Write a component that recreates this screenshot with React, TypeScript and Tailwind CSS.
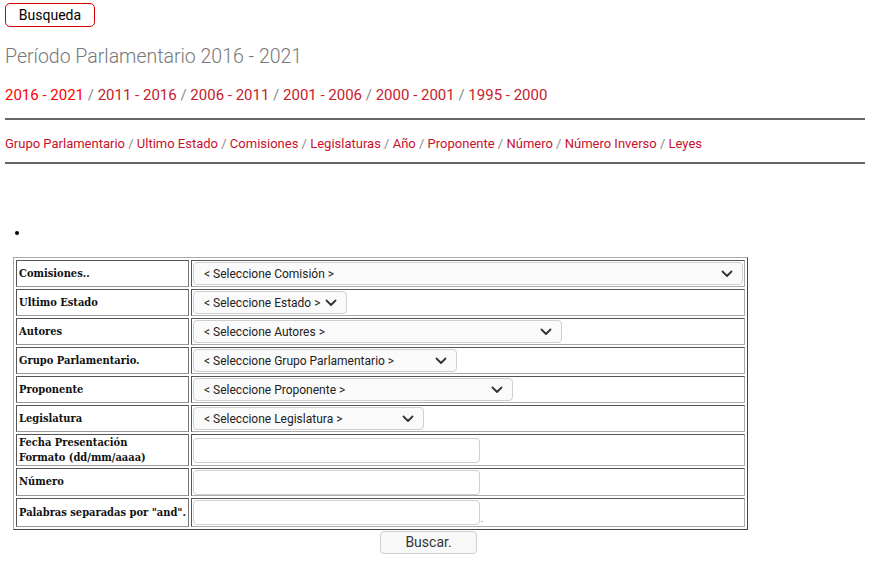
import React from "react";

const Chevron = () => (
  <svg width="12" height="8" viewBox="0 0 12 8" className="shrink-0">
    <path d="M1.5 1.5 L6 6 L10.5 1.5" fill="none" stroke="#333" strokeWidth="1.8" strokeLinecap="round" strokeLinejoin="round" />
  </svg>
);

const Sel = ({ text, w }: { text: string; w: string }) => (
  <div
    className={`${w} h-[23px] flex items-center justify-between gap-[4px] pl-[10px] pr-[9px] border border-[#cfcfcf] rounded-[4px] bg-[#fafafa] text-[12px] text-[#222]`}
    style={{ fontFamily: "Roboto, sans-serif" }}
  >
    <span className="whitespace-nowrap">{text}</span>
    <Chevron />
  </div>
);

const Inp = () => (
  <div className="w-[287px] h-[25px] border border-[#cfcfcf] rounded-[4px] bg-white" />
);

const labelCls =
  "border border-t-[#555] border-l-[#555] border-b-[#999] border-r-[#777] px-[2px] py-0 text-left align-middle font-bold text-[11px] leading-[14px] text-[#111] w-[175px] whitespace-nowrap";
const fieldCls =
  "border border-t-[#555] border-l-[#555] border-b-[#aaa] border-r-[#aaa] px-[1px] py-0 align-middle";

export default function App() {
  const years = ["2011 - 2016", "2006 - 2011", "2001 - 2006", "2000 - 2001", "1995 - 2000"];
  const nav = [
    "Grupo Parlamentario",
    "Ultimo Estado",
    "Comisiones",
    "Legislaturas",
    "Año",
    "Proponente",
    "Número",
    "Número Inverso",
    "Leyes",
  ];
  const rows: { label: React.ReactNode; field: React.ReactNode; h: string }[] = [
    { label: "Comisiones..", field: <Sel text="< Seleccione Comisión >" w="w-[550px]" />, h: "h-[27px]" },
    { label: "Ultimo Estado", field: <Sel text="< Seleccione Estado >" w="w-[154px]" />, h: "h-[27px]" },
    { label: "Autores", field: <Sel text="< Seleccione Autores >" w="w-[369px]" />, h: "h-[27px]" },
    { label: "Grupo Parlamentario.", field: <Sel text="< Seleccione Grupo Parlamentario >" w="w-[264px]" />, h: "h-[27px]" },
    { label: "Proponente", field: <Sel text="< Seleccione Proponente >" w="w-[320px]" />, h: "h-[27px]" },
    { label: "Legislatura", field: <Sel text="< Seleccione Legislatura >" w="w-[231px]" />, h: "h-[27px]" },
    {
      label: (
        <span className="block leading-[15px]">
          Fecha Presentación
          <br />
          Formato (dd/mm/aaaa)
        </span>
      ),
      field: <Inp />,
      h: "h-[32px]",
    },
    { label: "Número", field: <Inp />, h: "h-[28px]" },
    {
      label: 'Palabras separadas por "and".',
      field: (
        <div className="flex items-end">
          <Inp />
          <span className="text-[8px] leading-[8px] ml-[1px] mb-[1px]">.</span>
        </div>
      ),
      h: "h-[29px]",
    },
  ];

  return (
    <div className="w-[870px] h-[573px] bg-white px-[5px] pt-[3px]" style={{ fontFamily: "Roboto, sans-serif" }}>
      <div className="w-[90px] h-[24px] border border-[#d40000] rounded-[5px] flex items-center justify-center text-[14px] text-black">
        Busqueda
      </div>
      <div className="mt-[18px] text-[19.5px] leading-[24px] font-light text-[#777]">Período Parlamentario 2016 - 2021</div>
      <div className="mt-[16px] text-[15px] leading-[20px] whitespace-nowrap">
        <span className="text-[#ff0000]">2016 - 2021</span>
        {years.map((y) => (
          <span key={y}>
            <span className="text-[#888]"> / </span>
            <span className="text-[#c8202c]">{y}</span>
          </span>
        ))}
      </div>
      <div className="mt-[13px] border-t-2 border-[#666]" />
      <div className="mt-[16px] text-[13px] leading-[16px] whitespace-nowrap">
        {nav.map((n, i) => (
          <span key={n}>
            {i > 0 && <span className="text-[#888]"> / </span>}
            <span className="text-[#c8102e]">{n}</span>
          </span>
        ))}
      </div>
      <div className="mt-[10px] border-t-2 border-[#666]" />
      <div className="mt-[67px] ml-[10px] w-[4px] h-[4px] rounded-full bg-black" />
      <div className="mt-[22px] ml-[8px]">
        <table
          className="border-separate border-spacing-[2px] border border-t-[#aaa] border-l-[#aaa] border-b-[#444] border-r-[#444] w-[735px]"
          style={{ fontFamily: '"DejaVu Serif Condensed", "DejaVu Serif", serif' }}
        >
          <tbody>
            {rows.map((r, i) => (
              <tr key={i} className={r.h}>
                <td className={labelCls}>{r.label}</td>
                <td className={fieldCls}>{r.field}</td>
              </tr>
            ))}
          </tbody>
        </table>
      </div>
      <div className="ml-[375px] mt-[1px] w-[97px] h-[23px] border border-[#cfcfcf] rounded-[4px] bg-[#f8f8f8] flex items-center justify-center text-[14px] text-[#333]" style={{ fontFamily: "Roboto, sans-serif" }}>
        Buscar.
      </div>
    </div>
  );
}
